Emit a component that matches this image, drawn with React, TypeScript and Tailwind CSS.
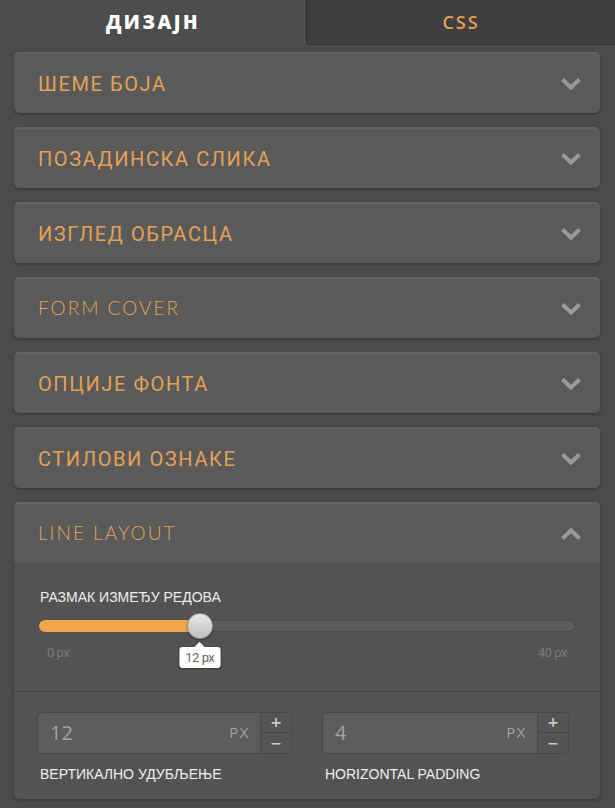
import { useState } from "react";

type Section = { title: string; latin?: boolean };

const sections: Section[] = [
  { title: "ШЕМЕ БОЈА" },
  { title: "ПОЗАДИНСКА СЛИКА" },
  { title: "ИЗГЛЕД ОБРАСЦА" },
  { title: "FORM COVER", latin: true },
  { title: "ОПЦИЈЕ ФОНТА" },
  { title: "СТИЛОВИ ОЗНАКЕ" },
];

function Chevron({ up = false }: { up?: boolean }) {
  return (
    <svg width="22" height="14" viewBox="0 0 22 14" className="shrink-0">
      <path
        d={up ? "M2.5 11.5 L11 3.5 L19.5 11.5" : "M2.5 2.5 L11 10.5 L19.5 2.5"}
        fill="none"
        stroke="#9a9a9a"
        strokeWidth="4"
        strokeLinejoin="miter"
      />
    </svg>
  );
}

function Title({ s }: { s: Section }) {
  return s.latin ? (
    <span className="font-['Lato','Open_Sans',sans-serif] font-light text-[19px] tracking-[2px] text-[#e3a256]">
      {s.title}
    </span>
  ) : (
    <span className="font-['Roboto','Noto_Sans',sans-serif] font-normal text-[20px] tracking-[1.6px] text-[#e3a256]">
      {s.title}
    </span>
  );
}

function NumberInput({ value }: { value: string }) {
  return (
    <div className="flex h-[42px] rounded-[5px] border border-[#474747] bg-[#5c5c5c] overflow-hidden">
      <div className="flex-1 flex items-center justify-between pl-[12px] pr-[10px] font-['Open_Sans',sans-serif]">
        <span className="text-[20px] text-[#a3a3a3]">{value}</span>
        <span className="text-[15px] tracking-[1.5px] text-[#a3a3a3]">PX</span>
      </div>
      <div className="w-[31px] flex flex-col border-l border-[#474747] bg-[#545454] text-[#c8c8c8] font-['DejaVu_Sans',sans-serif] font-bold">
        <div className="flex-1 flex items-center justify-center border-b border-[#474747] text-[14px] leading-none">+</div>
        <div className="flex-1 flex items-center justify-center text-[14px] leading-none">−</div>
      </div>
    </div>
  );
}

export default function App() {
  const [tab] = useState("design");
  const pct = 12 / 40;

  return (
    <div className="w-[615px] h-[808px] bg-[#4b4b4b] overflow-hidden font-['Roboto',sans-serif]">
      <div className="flex h-[45px]">
        <div
          className={`w-[306px] flex items-center justify-center text-white font-['Open_Sans',sans-serif] font-extrabold text-[19px] tracking-[2.5px] ${
            tab === "design" ? "bg-[#4d4d4d]" : ""
          }`}
        >
          ДИЗАЈН
        </div>
        <div className="flex-1 flex items-center justify-center bg-[#3e3e3e] border-l border-b border-[#2f2f2f] text-[#e3a256] font-['Open_Sans',sans-serif] font-semibold text-[18px] tracking-[2px]">
          CSS
        </div>
      </div>

      <div className="pl-[14px] pr-[15px] pt-[7px] flex flex-col gap-[14px]">
        {sections.map((s) => (
          <div
            key={s.title}
            className="h-[61px] rounded-[5px] bg-[#5a5a5a] border-t-2 border-[#636363] shadow-[0_1px_3px_rgba(0,0,0,0.35)] flex items-center justify-between pl-[24px] pr-[18px]"
          >
            <Title s={s} />
            <Chevron />
          </div>
        ))}

        <div className="rounded-[5px] bg-[#535353] border-t-2 border-[#636363] shadow-[0_1px_3px_rgba(0,0,0,0.35)] overflow-hidden">
          <div className="h-[59px] bg-[#5a5a5a] flex items-center justify-between pl-[24px] pr-[18px]">
            <Title s={{ title: "LINE LAYOUT", latin: true }} />
            <Chevron up />
          </div>

          <div className="px-[24px] pt-[27px] pb-[16px] border-b border-[#444444]">
            <div className="font-['Liberation_Sans',sans-serif] text-[14px] text-[#eeeeee] leading-none ml-[2px]">
              РАЗМАК ИЗМЕЂУ РЕДОВА
            </div>
            <div className="relative mt-[16px] h-[12px] rounded-full bg-[#5c5c5c] border border-[#4a4a4a]">
              <div
                className="absolute left-0 top-[-1px] h-[12px] rounded-l-full bg-[#eea54c]"
                style={{ width: `${pct * 100}%` }}
              />
              <div
                className="absolute top-[-8px] w-[26px] h-[26px] -ml-[13px] rounded-full bg-gradient-to-b from-[#e8e8e8] to-[#bdbdbd] border border-[#9c9c9c] shadow-[0_1px_2px_rgba(0,0,0,0.4)]"
                style={{ left: `${pct * 100}%` }}
              />
              <div
                className="absolute top-[21px] -translate-x-1/2 flex flex-col items-center"
                style={{ left: `${pct * 100}%` }}
              >
                <div className="w-0 h-0 border-l-[5px] border-r-[5px] border-b-[5px] border-l-transparent border-r-transparent border-b-white" />
                <div className="bg-white rounded-[3px] px-[6px] h-[21px] flex items-center text-[13px] text-[#666] tracking-[-0.5px] shadow-[0_1px_2px_rgba(0,0,0,0.3)]">
                  12 px
                </div>
              </div>
            </div>
            <div className="flex justify-between mt-[11px] px-[9px] text-[13px] text-[#7a7a7a] tracking-[-0.5px]">
              <span>0 px</span>
              <span>40 px</span>
            </div>
            <div className="h-[12px]" />
          </div>

          <div className="pl-[23px] pt-[20px] pb-[14px] grid grid-cols-[255px_247px] gap-x-[30px]">
            <div>
              <NumberInput value="12" />
              <div className="mt-[10px] ml-[3px] font-['Liberation_Sans',sans-serif] text-[14px] text-[#eeeeee]">
                ВЕРТИКАЛНО УДУБЉЕЊЕ
              </div>
            </div>
            <div>
              <NumberInput value="4" />
              <div className="mt-[10px] ml-[3px] font-['Liberation_Sans',sans-serif] text-[14px] text-[#eeeeee]">
                HORIZONTAL PADDING
              </div>
            </div>
          </div>
        </div>
      </div>
    </div>
  );
}
